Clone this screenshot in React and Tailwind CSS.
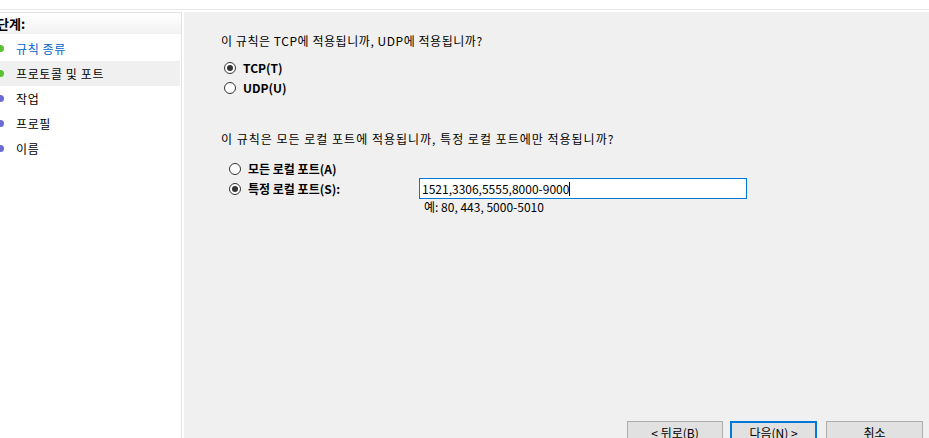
const font = { fontFamily: '"Noto Sans CJK KR", "Noto Sans", sans-serif' };

function Dot({ color }) {
  return <span className={`inline-block w-[7px] h-[7px] rounded-full ml-[-3px] mr-[12px] ${color}`} />;
}

function Step({ label, color, active, current }) {
  return (
    <div className={`flex items-center h-[25px] ${current ? 'bg-[#f0f0f0]' : ''}`}>
      <Dot color={color} />
      <span className={`tracking-[0.6px] ${active ? 'text-[#0066cc]' : 'text-black'}`}>{label}</span>
    </div>
  );
}

function Radio({ checked, children }) {
  return (
    <label className="flex items-center h-[20px] gap-[7px]">
      <span className="w-[12px] h-[12px] rounded-full border border-[#333] bg-white flex items-center justify-center">
        {checked && <span className="w-[6px] h-[6px] rounded-full bg-[#333]" />}
      </span>
      <span className="font-bold">{children}</span>
    </label>
  );
}

function WinButton({ children, focused, w }) {
  return (
    <div
      className={`h-[24px] flex items-center justify-center bg-[#e1e1e1] ${w} ${
        focused ? 'border-2 border-[#0078d7]' : 'border border-[#adadad]'
      }`}
    >
      {children}
    </div>
  );
}

export default function App() {
  return (
    <div className="w-[929px] h-[438px] overflow-hidden bg-white text-[12px] text-black flex flex-col" style={font}>
      <div className="h-[9px] shrink-0" />
      <div className="h-px bg-[#e8e8e8] shrink-0" />
      <div className="h-[2px] shrink-0" />
      <div className="flex flex-1 min-h-0">
        <div className="w-[182px] shrink-0 border-t border-r border-[#e3e3e3] flex flex-col">
          <div className="h-[21px] bg-gradient-to-b from-white to-[#f2f2f2] flex items-center font-bold text-[13px] ml-[-3px]">
            단계:
          </div>
          <div className="pt-[2px] pr-[1px]">
            <Step label="규칙 종류" color="bg-[#5ac034]" active />
            <Step label="프로토콜 및 포트" color="bg-[#5ac034]" current />
            <Step label="작업" color="bg-[#6b6bd6]" />
            <Step label="프로필" color="bg-[#6b6bd6]" />
            <Step label="이름" color="bg-[#6b6bd6]" />
          </div>
        </div>
        <div className="w-[2px] shrink-0" />
        <div className="flex-1 bg-[#f0f0f0] flex flex-col pl-[37px] pr-[6px]">
          <div className="mt-[21px] h-[16px] leading-[16px] tracking-[0.55px]">
            이 규칙은 TCP에 적용됩니까, UDP에 적용됩니까?
          </div>
          <div className="mt-[9px] ml-[3px]">
            <Radio checked>TCP(T)</Radio>
            <Radio>UDP(U)</Radio>
          </div>
          <div className="mt-[33px] h-[16px] leading-[16px] tracking-[1px]">
            이 규칙은 모든 로컬 포트에 적용됩니까, 특정 로컬 포트에만 적용됩니까?
          </div>
          <div className="mt-[12px] ml-[8px]">
            <Radio>모든 로컬 포트(A)</Radio>
            <div className="flex items-start">
              <div className="w-[190px]">
                <Radio checked>특정 로컬 포트(S):</Radio>
              </div>
              <div className="flex flex-col">
                <div className="w-[328px] h-[21px] border border-[#0078d7] bg-white flex items-center px-[2px] mt-[-1px]">
                  1521,3306,5555,8000-9000
                  <span className="w-px h-[14px] bg-black" />
                </div>
                <div className="ml-[5px] h-[16px] leading-[16px]">예: 80, 443, 5000-5010</div>
              </div>
            </div>
          </div>
          <div className="flex-1" />
          <div className="flex justify-end gap-[7px] mb-[-7px] items-start">
            <WinButton w="w-[96px]">&lt; 뒤로(B)</WinButton>
            <WinButton w="w-[87px] mr-[2px]" focused>다음(N) &gt;</WinButton>
            <WinButton w="w-[97px]">취소</WinButton>
          </div>
        </div>
      </div>
    </div>
  );
}
